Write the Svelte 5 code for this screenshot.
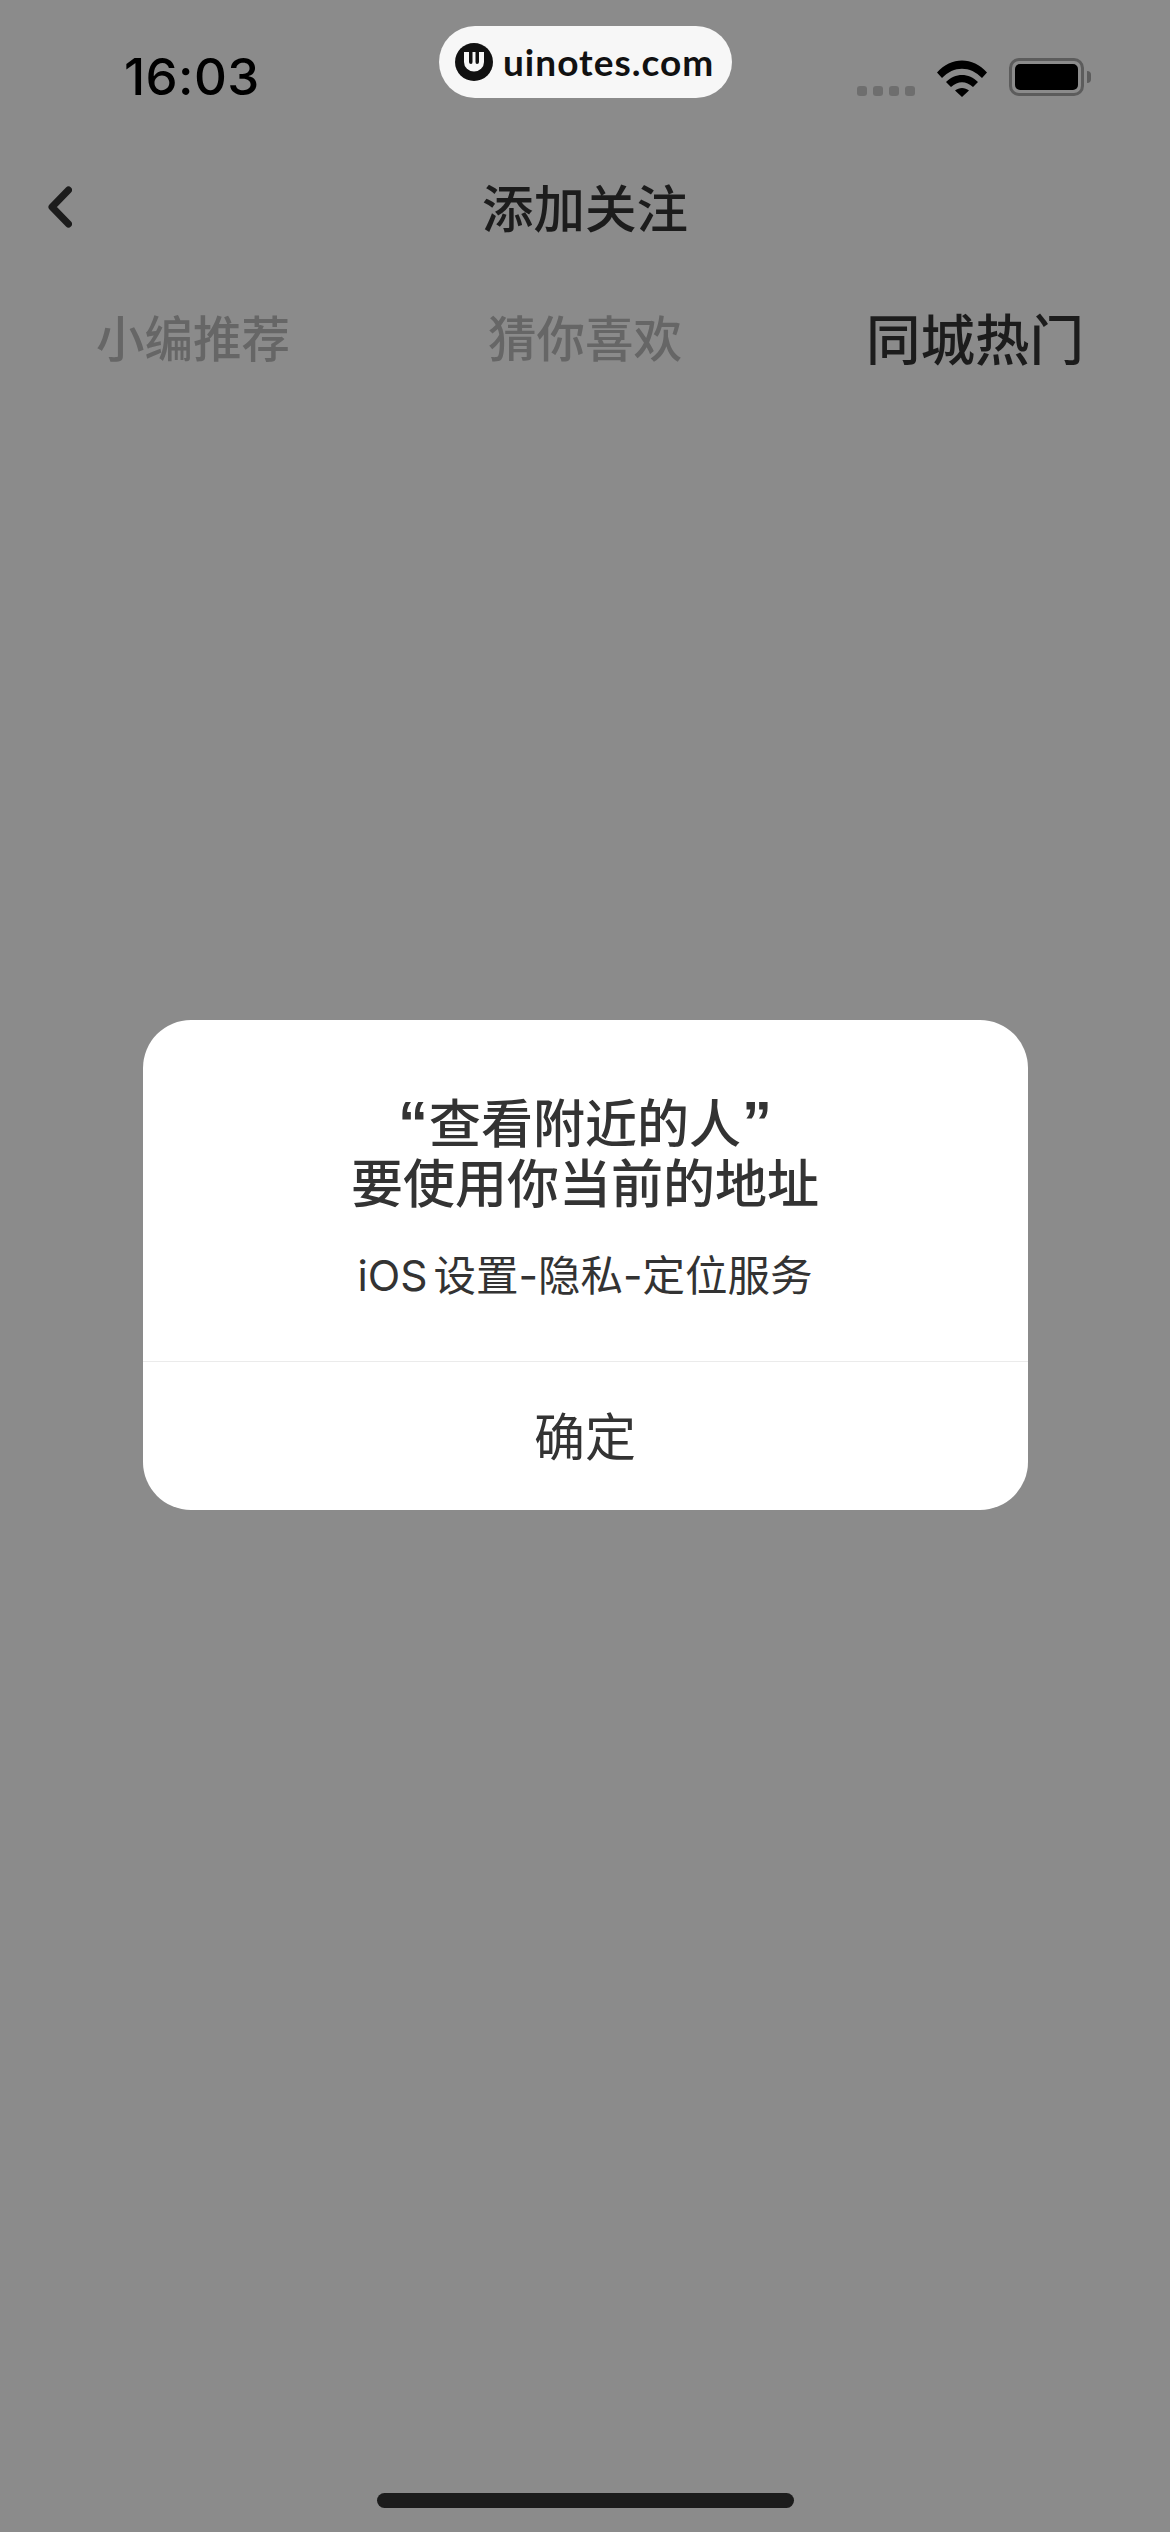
<script>
  const tabs = [
    { label: '小编推荐', active: false },
    { label: '猜你喜欢', active: false },
    { label: '同城热门', active: true }
  ];
</script>

<div class="page">
  <header class="status">
    <span class="time">16:03</span>
    <div class="indicators">
      <div class="signal"><i></i><i></i><i></i><i></i></div>
      <svg class="wifi" viewBox="0 0 50 38" width="50" height="38" aria-hidden="true">
        <path d="M0 13.5 C14 -2.5 36 -2.5 50 13.5 L45 19 C33.5 6.5 16.500 6.500 5 19 Z" fill="#000"/>
        <path d="M9 23 C18 13.500 32 13.500 41 23 L36 28 C29 21.500 21 21.500 14 28 Z" fill="#000"/>
        <path d="M18 31.500 C22 28 28 28 32 31.500 L25 38 Z" fill="#000"/>
      </svg>
      <div class="battery"><div class="cell"><b></b></div><span class="nub"></span></div>
    </div>
  </header>

  <nav class="navbar">
    <svg class="back" viewBox="0 0 24 42" width="24" height="42" aria-hidden="true">
      <path d="M20.500 4 L4 21 L20.500 38" fill="none" stroke="#1c1c1c" stroke-width="7" stroke-linecap="round" stroke-linejoin="round"/>
    </svg>
    <h1>添加关注</h1>
  </nav>

  <div class="tabs">
    {#each tabs as tab}
      <div class="tab" class:active={tab.active}>{tab.label}</div>
    {/each}
  </div>

  <div class="pill">
    <svg viewBox="0 0 38 38" width="38" height="38" aria-hidden="true">
      <circle cx="19" cy="19" r="19" fill="#111"/>
      <path d="M9 9 H29 V19 A10 9.500 0 0 1 9 19 Z" fill="#f7f7f7"/>
      <path d="M14 9 H17.500 L17.500 19 Q17.500 21 16 21 Q14 21 14 19 Z M20.500 9 H24 V19 Q24 21 22 21 Q20.500 21 20.500 19 Z" fill="#111"/>
    </svg>
    <span>uinotes.com</span>
  </div>

  <div class="overlay">
    <div class="dialog">
      <div class="body">
        <h2><span class="q">“</span>查看附近的人<span class="q">”</span><br />要使用你当前的地址</h2>
        <p>iOS 设置-隐私-定位服务</p>
      </div>
      <div class="action">确定</div>
    </div>
  </div>

  <div class="home"></div>
</div>

<style>
  :global(body) {
    margin: 0;
    background: #8b8b8b;
  }
  .page {
    position: relative;
    width: 1170px;
    height: 2532px;
    overflow: hidden;
    background: #8b8b8b;
    font-family: "Inter", "Noto Sans CJK SC", sans-serif;
  }
  .status {
    height: 156px;
    box-sizing: border-box;
    padding: 46px 79px 0 124px;
    display: flex;
    justify-content: space-between;
    align-items: flex-start;
  }
  .time {
    font-size: 51px;
    line-height: 62px;
    font-weight: 500;
    color: #000;
    letter-spacing: 0.4px;
  }
  .indicators {
    display: flex;
    align-items: flex-start;
    padding-top: 12px;
  }
  .signal {
    display: flex;
    gap: 6px;
    margin-top: 28px;
    margin-right: 22px;
  }
  .signal i {
    width: 10px;
    height: 10px;
    border-radius: 3px;
    background: #6e6e6e;
  }
  .wifi {
    margin-top: 1px;
    margin-right: 22px;
  }
  .battery {
    display: flex;
    align-items: center;
  }
  .cell {
    width: 75px;
    height: 38px;
    box-sizing: border-box;
    border: 3px solid #5c5c5c;
    border-radius: 10px;
    padding: 3px;
    display: flex;
  }
  .cell b {
    flex: 1;
    background: #000;
    border-radius: 5px;
  }
  .nub {
    width: 4px;
    height: 12px;
    margin-left: 3px;
    background: #5c5c5c;
    border-radius: 0 6px 6px 0;
  }
  .navbar {
    position: relative;
    height: 104px;
    box-sizing: border-box;
    padding-top: 1px;
    display: flex;
    align-items: center;
    justify-content: center;
  }
  .back {
    position: absolute;
    left: 48px;
    top: 30px;
  }
  h1 {
    margin: 0;
    font-size: 51.500px;
    line-height: 60px;
    font-weight: 500;
    color: #1c1c1c;
  }
  .tabs {
    display: grid;
    grid-template-columns: repeat(3, 1fr);
    height: 100px;
    margin-top: 30px;
    align-items: center;
  }
  .tab {
    text-align: center;
    font-size: 48.500px;
    line-height: 60px;
    font-weight: 500;
    color: #666;
  }
  .tab:first-child {
    padding-right: 4px;
  }
  .tab.active {
    font-size: 54.500px;
    color: #1c1c1c;
  }
  .pill {
    position: absolute;
    left: 439px;
    top: 26px;
    width: 293px;
    height: 72px;
    box-sizing: border-box;
    padding-left: 16px;
    border-radius: 36px;
    background: #f7f7f7;
    display: flex;
    align-items: center;
    gap: 10px;
  }
  .pill span {
    font-family: "Lato", sans-serif;
    font-size: 37px;
    font-weight: 700;
    color: #111;
    letter-spacing: 1px;
    line-height: 44px;
  }
  .overlay {
    position: absolute;
    inset: 0 0 2px;
    display: flex;
    align-items: center;
    justify-content: center;
  }
  .dialog {
    width: 885px;
    background: #fff;
    border-radius: 48px;
    overflow: hidden;
    color: #333;
    text-align: center;
  }
  .body {
    padding: 75px 40px 55px;
    border-bottom: 1px solid #ebebeb;
  }
  h2 {
    margin: 0;
    font-size: 52px;
    line-height: 60px;
    font-weight: 500;
  }
  .q {
    font-family: "Liberation Sans", sans-serif;
    font-size: 60px;
    font-weight: 700;
    line-height: 0;
    padding: 0 1px;
  }
  .body p {
    margin: 31px 0 0;
    font-size: 42.500px;
    line-height: 60px;
    font-weight: 400;
    word-spacing: -6px;
  }
  .action {
    height: 148px;
    box-sizing: border-box;
    padding-top: 4px;
    font-size: 51px;
    line-height: 144px;
  }
  .home {
    position: absolute;
    left: 377px;
    top: 2493px;
    width: 417px;
    height: 15px;
    border-radius: 8px;
    background: #1c1c1c;
  }
</style>
